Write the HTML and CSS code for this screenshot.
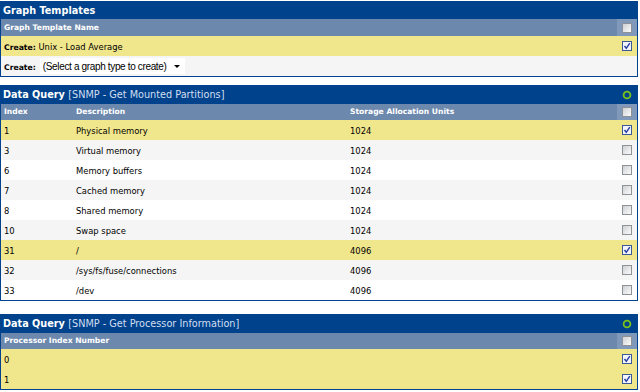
FILE: index.html
```html
<!DOCTYPE html>
<html lang="en">
<head>
    <meta charset="UTF-8">
    <meta name="viewport" content="width=device-width, initial-scale=1.0">
    <title>Cacti - New Graphs</title>
    <link rel="stylesheet" href="styles.css">
</head>
<body>
    <div class="box">
        <table class="grid">
            <colgroup><col><col class="col-check"></colgroup>
            <tr class="title"><td colspan="2">Graph Templates</td></tr>
            <tr class="head">
                <td>Graph Template Name</td>
                <td class="check-cell"><span class="cb"></span></td>
            </tr>
            <tr class="row selected">
                <td><b>Create:</b> Unix - Load Average</td>
                <td class="check-cell"><span class="cb on"><svg viewBox="0 0 8 8"><polyline points="1.5,4 3.3,6.3 6.8,1.2"/></svg></span></td>
            </tr>
            <tr class="row alt">
                <td colspan="2"><b>Create:</b><span class="select-wrap"><select><option>(Select a graph type to create)</option></select></span></td>
            </tr>
        </table>
    </div>

    <div class="box query">
        <table class="grid">
            <colgroup><col class="col-index"><col class="col-desc"><col><col class="col-check"></colgroup>
            <tr class="title">
                <td colspan="3">Data Query <span class="sub">[SNMP - Get Mounted Partitions]</span></td>
                <td class="check-cell"><svg class="ring" viewBox="0 0 10 10"><circle cx="5" cy="5" r="3.4"/></svg></td>
            </tr>
            <tr class="head">
                <td>Index</td>
                <td>Description</td>
                <td>Storage Allocation Units</td>
                <td class="check-cell"><span class="cb"></span></td>
            </tr>
            <tr class="row selected"><td>1</td><td>Physical memory</td><td>1024</td><td class="check-cell"><span class="cb on"><svg viewBox="0 0 8 8"><polyline points="1.5,4 3.3,6.3 6.8,1.2"/></svg></span></td></tr>
            <tr class="row alt"><td>3</td><td>Virtual memory</td><td>1024</td><td class="check-cell"><span class="cb"></span></td></tr>
            <tr class="row"><td>6</td><td>Memory buffers</td><td>1024</td><td class="check-cell"><span class="cb"></span></td></tr>
            <tr class="row alt"><td>7</td><td>Cached memory</td><td>1024</td><td class="check-cell"><span class="cb"></span></td></tr>
            <tr class="row"><td>8</td><td>Shared memory</td><td>1024</td><td class="check-cell"><span class="cb"></span></td></tr>
            <tr class="row alt"><td>10</td><td>Swap space</td><td>1024</td><td class="check-cell"><span class="cb"></span></td></tr>
            <tr class="row selected"><td>31</td><td>/</td><td>4096</td><td class="check-cell"><span class="cb on"><svg viewBox="0 0 8 8"><polyline points="1.5,4 3.3,6.3 6.8,1.2"/></svg></span></td></tr>
            <tr class="row alt"><td>32</td><td>/sys/fs/fuse/connections</td><td>4096</td><td class="check-cell"><span class="cb"></span></td></tr>
            <tr class="row"><td>33</td><td>/dev</td><td>4096</td><td class="check-cell"><span class="cb"></span></td></tr>
        </table>
    </div>

    <div class="box query spaced">
        <table class="grid">
            <colgroup><col><col class="col-check"></colgroup>
            <tr class="title">
                <td>Data Query <span class="sub">[SNMP - Get Processor Information]</span></td>
                <td class="check-cell"><svg class="ring" viewBox="0 0 10 10"><circle cx="5" cy="5" r="3.4"/></svg></td>
            </tr>
            <tr class="head">
                <td>Processor Index Number</td>
                <td class="check-cell"><span class="cb"></span></td>
            </tr>
            <tr class="row selected"><td>0</td><td class="check-cell"><span class="cb on"><svg viewBox="0 0 8 8"><polyline points="1.5,4 3.3,6.3 6.8,1.2"/></svg></span></td></tr>
            <tr class="row selected"><td>1</td><td class="check-cell"><span class="cb on"><svg viewBox="0 0 8 8"><polyline points="1.5,4 3.3,6.3 6.8,1.2"/></svg></span></td></tr>
        </table>
    </div>
</body>
</html>
```

FILE: styles.css
```css
body {
    margin: 0;
    padding-top: 1px;
    background: #fff;
    font-family: "DejaVu Sans", Verdana, sans-serif;
    font-size: 8.4px;
    color: #000;
}
.box {
    border: 1px solid #00438c;
    margin: 0 2px 8px 0;
}
.box.spaced {
    margin-top: 13px;
}
.grid {
    width: 100%;
    border-collapse: collapse;
    table-layout: fixed;
}
.grid td {
    padding: 0 3px;
    white-space: nowrap;
    overflow: hidden;
    vertical-align: middle;
    line-height: 1;
}
.col-index {
    width: 72px;
}
.col-desc {
    width: 274px;
}
.col-check {
    width: 20px;
}
.title {
    height: 17px;
}
.query .title {
    height: 18px;
}
.title td {
    padding: 0 2px;
    background: #00438c;
    color: #fff;
    font-weight: bold;
    font-size: 9.7px;
}
.title .sub {
    font-weight: normal;
    color: #d4dff2;
}
.head {
    height: 17px;
}
.query .head {
    height: 16px;
}
.head td {
    background: #6d88ad;
    color: #fff;
    font-weight: bold;
    font-size: 7.6px;
}
.head .check-cell {
    background: #8098ba;
}
.row {
    height: 20px;
}
.row td {
    padding-top: 2px;
    background: #fff;
}
.row.alt td {
    background: #f5f5f5;
}
.row.selected td {
    background: #f0e68c;
}
.row b {
    font-size: 7.7px;
}
.grid .check-cell {
    padding: 0;
    text-align: center;
}
.cb {
    display: inline-block;
    width: 10px;
    height: 10px;
    box-sizing: border-box;
    border: 1px solid #8e9197;
    background: linear-gradient(135deg, #cfd0d2, #fbfbfb);
    vertical-align: middle;
}
.cb.on {
    border-color: #3b5897;
    background: #f3f5fb;
}
.cb svg {
    display: block;
    width: 8px;
    height: 8px;
}
.cb polyline {
    fill: none;
    stroke: #2b40a4;
    stroke-width: 1.5;
}
.ring {
    display: inline-block;
    width: 10px;
    height: 10px;
    vertical-align: middle;
}
.ring circle {
    fill: none;
    stroke: #7cc41a;
    stroke-width: 1.8;
}
.select-wrap {
    display: inline-block;
    position: relative;
    margin-left: 4px;
    margin-top: -2px;
    vertical-align: middle;
}
.select-wrap select {
    appearance: none;
    -webkit-appearance: none;
    display: block;
    width: 145px;
    height: 16px;
    margin: 0;
    padding: 0 0 0 3px;
    border: 0;
    border-radius: 0;
    background: #fff;
    color: #000;
    font-family: "Liberation Sans", Arial, sans-serif;
    font-size: 10px;
    letter-spacing: -0.35px;
}
.select-wrap::after {
    content: "";
    position: absolute;
    right: 5px;
    top: 7px;
    border-left: 3px solid transparent;
    border-right: 3px solid transparent;
    border-top: 3px solid #000;
}
```
